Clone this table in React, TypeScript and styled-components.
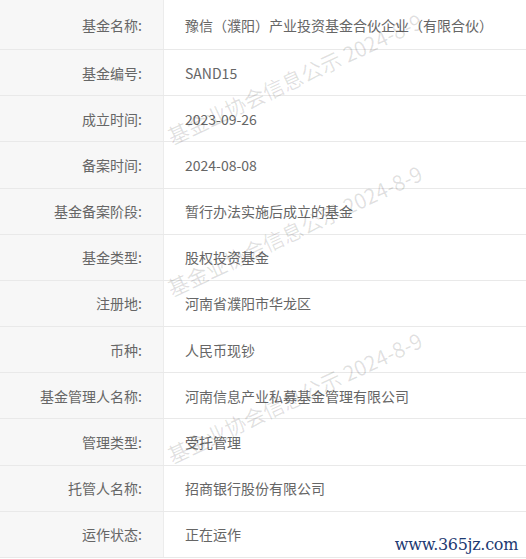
import styled, { createGlobalStyle } from 'styled-components';

interface FundRow {
    label: string;
    value: string;
}

const rows: FundRow[] = [
    { label: '基金名称:', value: '豫信（濮阳）产业投资基金合伙企业（有限合伙）' },
    { label: '基金编号:', value: 'SAND15' },
    { label: '成立时间:', value: '2023-09-26' },
    { label: '备案时间:', value: '2024-08-08' },
    { label: '基金备案阶段:', value: '暂行办法实施后成立的基金' },
    { label: '基金类型:', value: '股权投资基金' },
    { label: '注册地:', value: '河南省濮阳市华龙区' },
    { label: '币种:', value: '人民币现钞' },
    { label: '基金管理人名称:', value: '河南信息产业私募基金管理有限公司' },
    { label: '管理类型:', value: '受托管理' },
    { label: '托管人名称:', value: '招商银行股份有限公司' },
    { label: '运作状态:', value: '正在运作' },
];

// 水印位置 (左下角)
const marks = [147, 299, 466];

const GlobalStyle = createGlobalStyle`
    body {
        margin: 0;
        background: #fff;
        font-family: "Noto Sans CJK SC", "Noto Sans", sans-serif;
    }
`;

const Page = styled.div`
    position: relative;
    width: 526px;
    height: 559px;
    overflow: hidden;
`;

const InfoTable = styled.div`
    display: flex;
    flex-direction: column;
`;

const Row = styled.div<{ $first?: boolean }>`
    display: grid;
    grid-template-columns: 164px 1fr;
    height: ${props => (props.$first ? '50px' : '46.18px')};
    box-sizing: border-box;
    border-bottom: 1px solid #e9e9e9;
`;

const Label = styled.div`
    background-color: #f7f7f7;
    border-right: 1px solid #ececec;
    display: flex;
    align-items: center;
    justify-content: flex-end;
    padding-right: 21px;
    font-size: 14px;
    color: #666;
`;

const Value = styled.div`
    display: flex;
    align-items: center;
    padding-left: 21px;
    font-size: 14px;
    color: #666;
    white-space: nowrap;
`;

const Watermark = styled.span`
    position: absolute;
    left: 173px;
    font-size: 21px;
    line-height: 1;
    color: rgba(0, 0, 0, 0.12);
    white-space: nowrap;
    transform-origin: left bottom;
    transform: rotate(-25deg);
    pointer-events: none;
`;

const SiteMark = styled.span`
    position: absolute;
    right: 8px;
    bottom: 5px;
    font-family: "DejaVu Serif", "Liberation Serif", serif;
    font-size: 16px;
    letter-spacing: -0.3px;
    color: #1d3a72;
    pointer-events: none;
`;

export default function App() {
    return (
        <Page>
            <GlobalStyle />
            <InfoTable>
                {rows.map((r, i) => (
                    <Row key={r.label} $first={i === 0}>
                        <Label>{r.label}</Label>
                        <Value>{r.value}</Value>
                    </Row>
                ))}
            </InfoTable>
            {marks.map(y => (
                <Watermark key={y} style={{ top: y - 21 }}>
                    基金业协会信息公示 2024-8-9
                </Watermark>
            ))}
            <SiteMark>www.365jz.com</SiteMark>
        </Page>
    );
}
